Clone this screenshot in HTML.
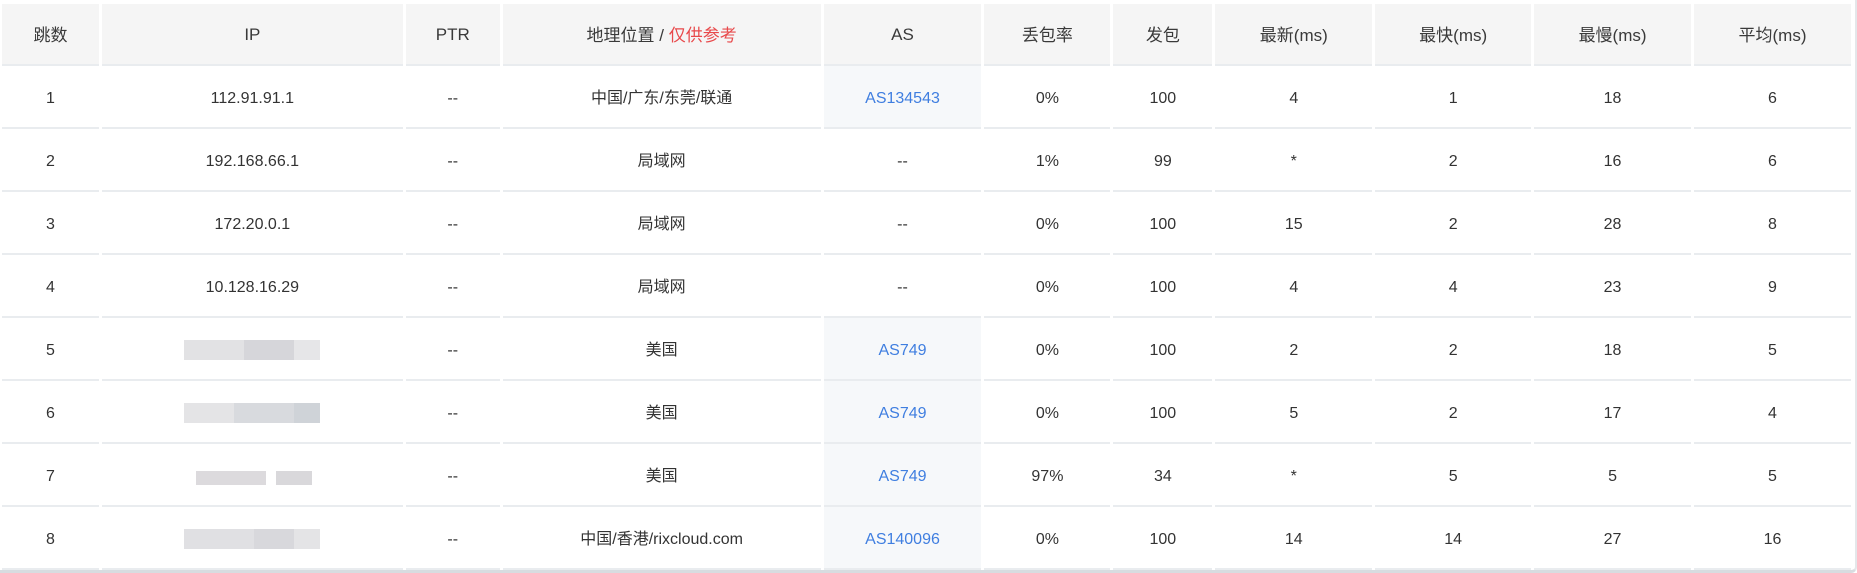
<!DOCTYPE html>
<html><head><meta charset="utf-8"><style>
html,body{margin:0;padding:0;background:#fff;width:1857px;height:573px;overflow:hidden;font-family:"Liberation Sans","Noto Sans CJK SC",sans-serif;}
.wrap{position:absolute;left:0;top:0;width:1855px;height:570px;border-right:2px solid #e4e7ea;border-bottom:3px solid #d8dce0;border-bottom-right-radius:6px;}
table{position:absolute;left:-1px;top:4px;border-collapse:separate;border-spacing:3px 0;table-layout:fixed;}
td,th{padding:0;text-align:center;color:#333;font-size:16px;font-weight:normal;border-bottom:2px solid #e9ecef;line-height:20px;vertical-align:middle;}
td span.t,th span.t{display:inline-block;height:20px;line-height:20px;overflow:visible;vertical-align:middle;position:relative;top:1px}
th{height:58px;padding-top:2px;background:#f5f5f5;font-size:17px;color:#3a3a3a}
td{height:57px;padding-top:4px;}
td.as{background:#f6f8fa;color:#3f7ee0}
.red{color:#e8494b}
.blur{display:inline-block;position:relative;width:136px;height:20px;vertical-align:middle}
.blur i{position:absolute;top:0;height:20px;background:#d9d9dc}
</style></head><body><div class="wrap">
<table>
<colgroup><col style="width:97px"><col style="width:301px"><col style="width:94px"><col style="width:318px"><col style="width:158px"><col style="width:126px"><col style="width:99px"><col style="width:157px"><col style="width:156px"><col style="width:157px"><col style="width:157px"></colgroup>
<tr><th><span class="t">跳数</span></th><th>IP</th><th>PTR</th><th><span class="t">地理位置 / <span class="red">仅供参考</span></span></th><th>AS</th><th><span class="t">丢包率</span></th><th><span class="t">发包</span></th><th><span class="t">最新(ms)</span></th><th><span class="t">最快(ms)</span></th><th><span class="t">最慢(ms)</span></th><th><span class="t">平均(ms)</span></th></tr>
<tr><td>1</td><td>112.91.91.1</td><td>--</td><td><span class="t">中国/广东/东莞/联通</span></td><td class="as">AS134543</td><td>0%</td><td>100</td><td>4</td><td>1</td><td>18</td><td>6</td></tr>
<tr><td>2</td><td>192.168.66.1</td><td>--</td><td><span class="t">局域网</span></td><td>--</td><td>1%</td><td>99</td><td>*</td><td>2</td><td>16</td><td>6</td></tr>
<tr><td>3</td><td>172.20.0.1</td><td>--</td><td><span class="t">局域网</span></td><td>--</td><td>0%</td><td>100</td><td>15</td><td>2</td><td>28</td><td>8</td></tr>
<tr><td>4</td><td>10.128.16.29</td><td>--</td><td><span class="t">局域网</span></td><td>--</td><td>0%</td><td>100</td><td>4</td><td>4</td><td>23</td><td>9</td></tr>
<tr><td>5</td><td><span class="blur"><i style="left:0;width:60px;background:#e2e2e4"></i><i style="left:60px;width:50px;background:#d6d6da"></i><i style="left:110px;width:26px;background:#e6e6e8"></i></span></td><td>--</td><td><span class="t">美国</span></td><td class="as">AS749</td><td>0%</td><td>100</td><td>2</td><td>2</td><td>18</td><td>5</td></tr>
<tr><td>6</td><td><span class="blur"><i style="left:0;width:50px;background:#e4e4e6"></i><i style="left:50px;width:60px;background:#d8dade"></i><i style="left:110px;width:26px;background:#cfd3d8"></i></span></td><td>--</td><td><span class="t">美国</span></td><td class="as">AS749</td><td>0%</td><td>100</td><td>5</td><td>2</td><td>17</td><td>4</td></tr>
<tr><td>7</td><td><span class="blur"><i style="left:12px;width:70px;background:#dcdadd;top:5px;height:14px"></i><i style="left:92px;width:36px;background:#d9d8db;top:5px;height:14px"></i></span></td><td>--</td><td><span class="t">美国</span></td><td class="as">AS749</td><td>97%</td><td>34</td><td>*</td><td>5</td><td>5</td><td>5</td></tr>
<tr><td>8</td><td><span class="blur"><i style="left:0;width:70px;background:#e0e0e3"></i><i style="left:70px;width:40px;background:#d8d8dc"></i><i style="left:110px;width:26px;background:#e4e4e6"></i></span></td><td>--</td><td><span class="t">中国/香港/rixcloud.com</span></td><td class="as">AS140096</td><td>0%</td><td>100</td><td>14</td><td>14</td><td>27</td><td>16</td></tr>
</table></div></body></html>
